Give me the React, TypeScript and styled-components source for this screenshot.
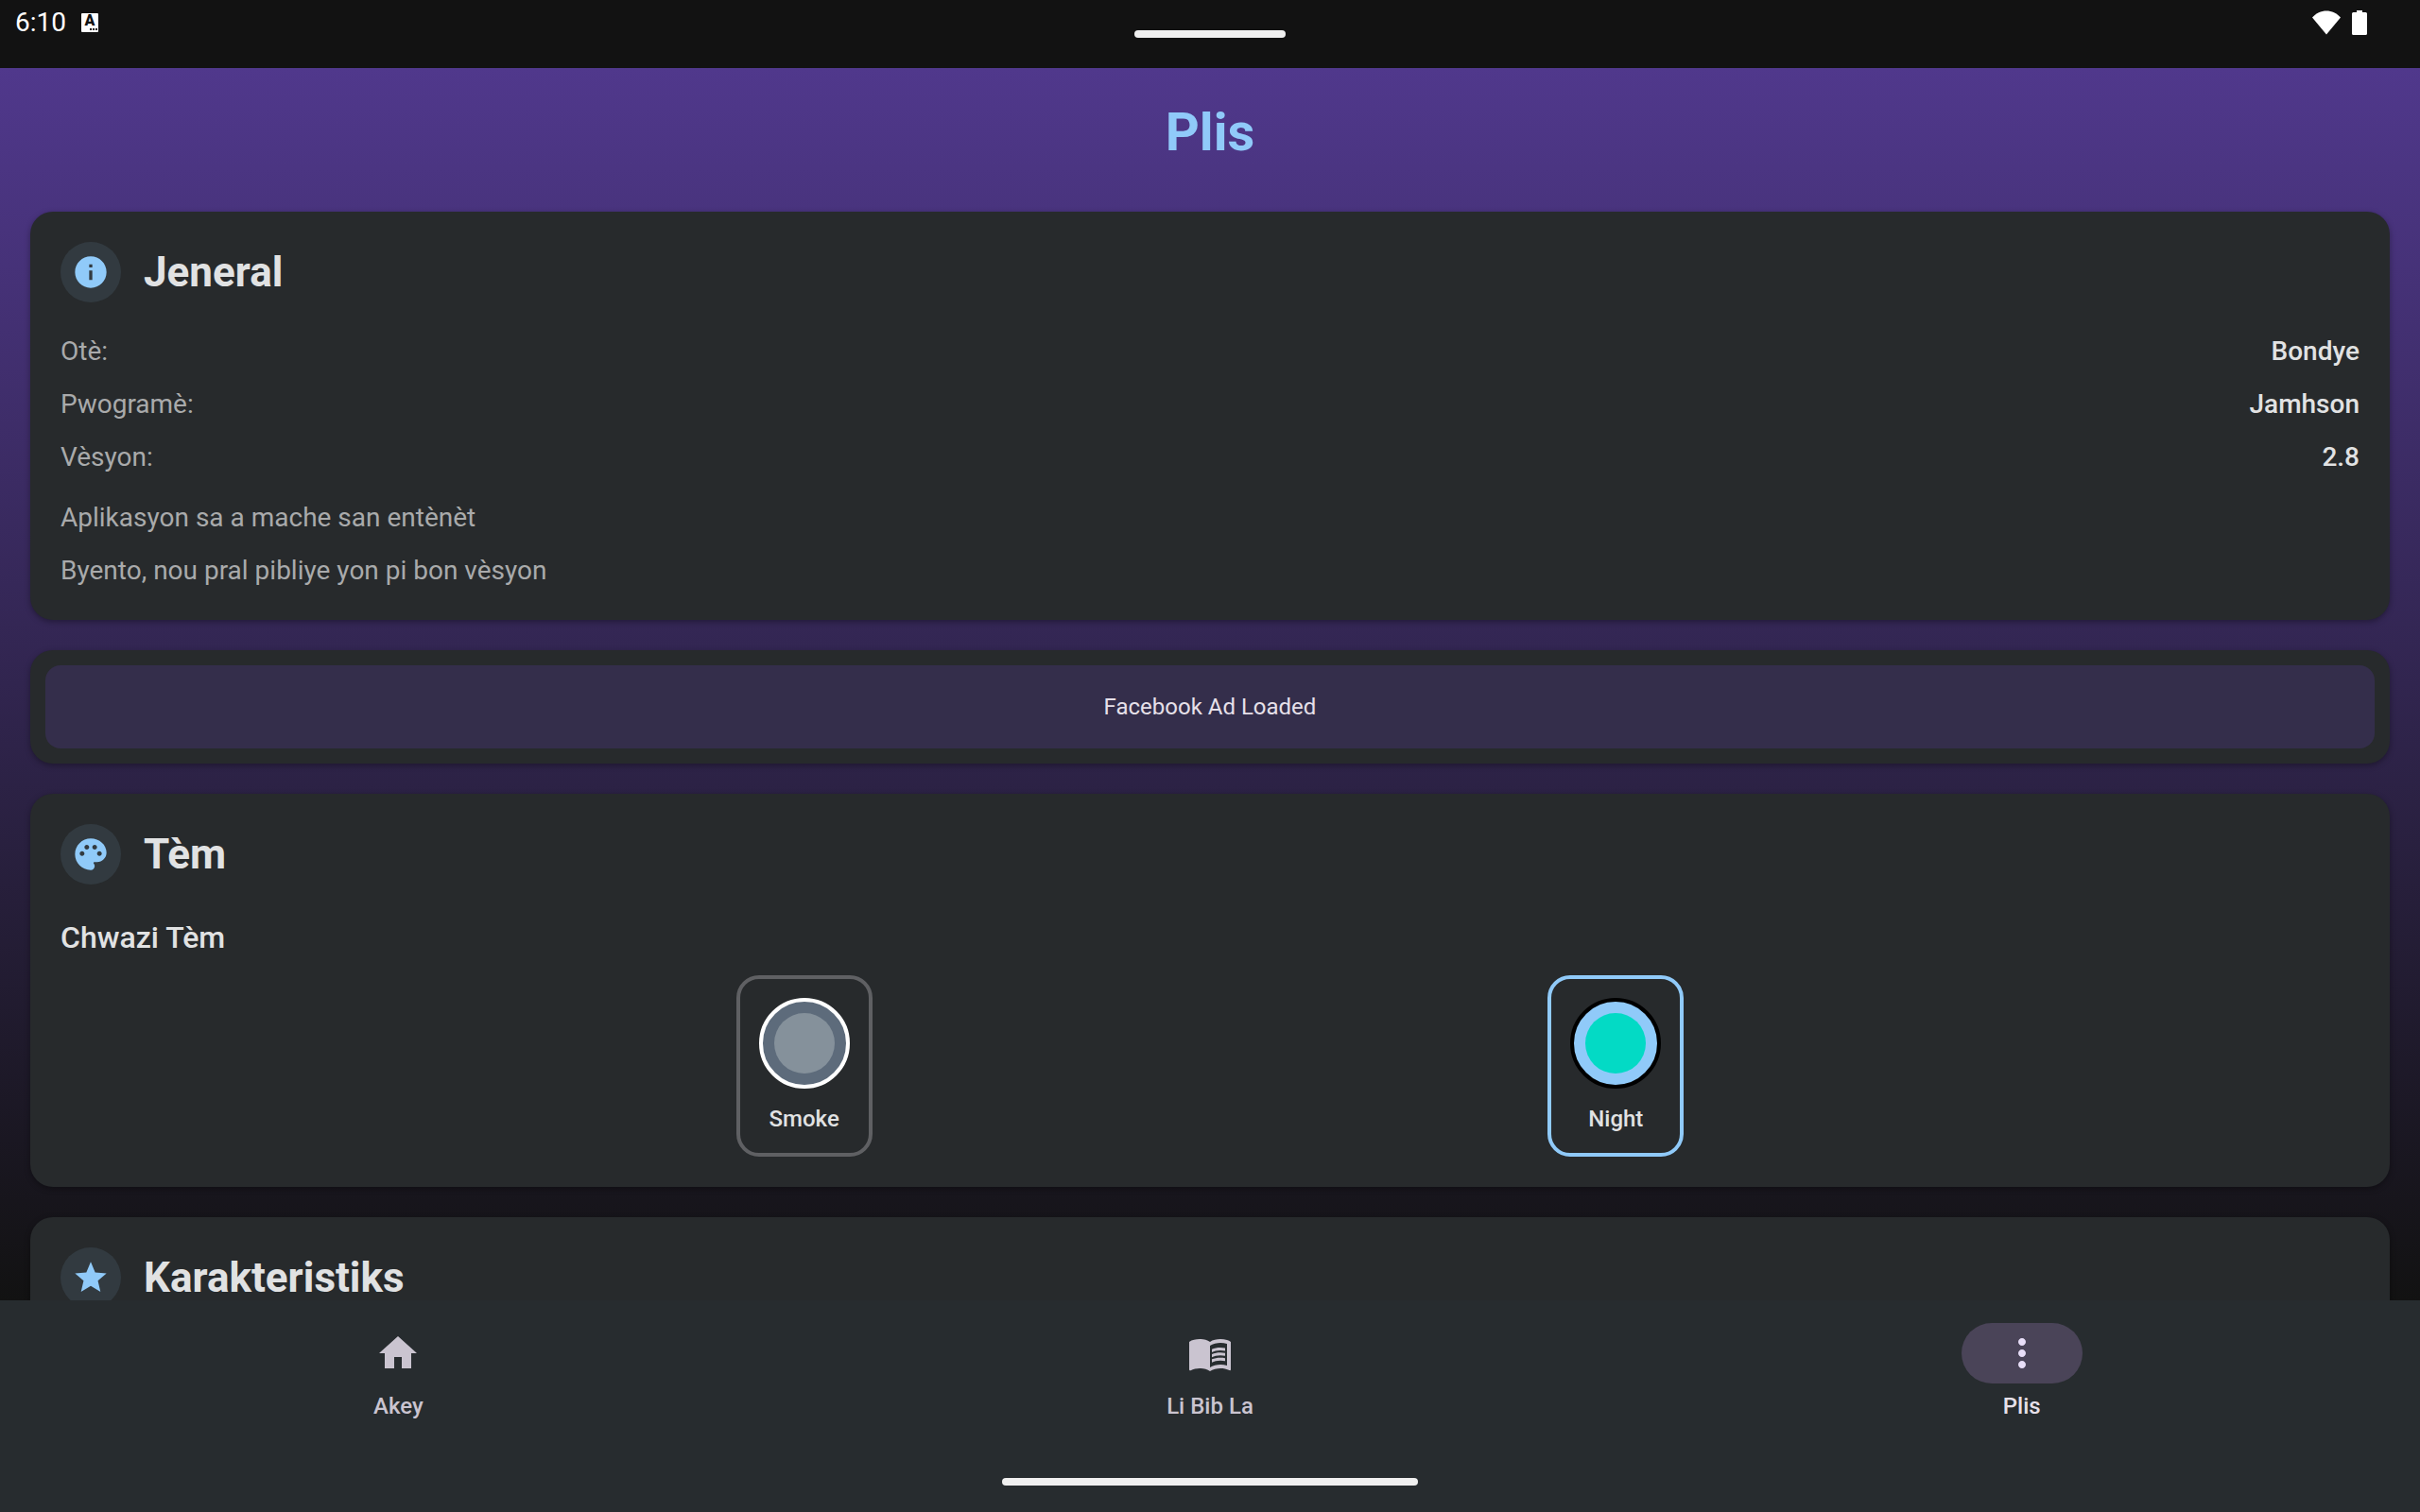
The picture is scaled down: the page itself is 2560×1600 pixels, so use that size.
import React, { useState } from "react";
import styled, { createGlobalStyle } from "styled-components";
import { MdHome, MdInfo, MdMenuBook, MdMoreVert, MdPalette, MdStar } from "react-icons/md";

const color = {
  bar: "#121212",
  card: "#272a2c",
  nav: "#272c2f",
  accent: "#90caf9",
  text: "#e1e2e3",
  muted: "#a9aaab",
};

const GlobalStyle = createGlobalStyle`
  *, *::before, *::after { box-sizing: border-box; }
  body {
    margin: 0;
    background: ${color.bar};
    font-family: Roboto, "Liberation Sans", sans-serif;
    color: ${color.text};
  }
  h1, h2, h3, p, dl, dd { margin: 0; }
`;

const Screen = styled.div`
  height: 100vh;
  display: flex;
  flex-direction: column;
`;

const StatusBar = styled.header`
  position: relative;
  flex: none;
  height: 72px;
  padding: 0 56px 24px 16px;
  display: flex;
  justify-content: space-between;
  align-items: center;
  background: ${color.bar};
  color: #fff;
`;

const StatusGroup = styled.div<{ $gap: number }>`
  display: flex;
  align-items: center;
  gap: ${(p) => p.$gap}px;
`;

const Clock = styled.time`
  font-size: 28px;
  line-height: 32px;
`;

const KeyboardBadge = styled.span`
  width: 18px;
  height: 20px;
  border-radius: 1px;
  background: #fff;
  color: ${color.bar};
  display: flex;
  flex-direction: column;
  align-items: center;
  font-size: 16px;
  font-weight: 900;
  line-height: 16px;
`;

const BadgeDots = styled.span`
  align-self: flex-end;
  width: 8px;
  height: 2px;
  margin-right: 1px;
  background: repeating-linear-gradient(to right, ${color.bar} 0 2px, #fff 2px 3px);
`;

const Handle = styled.span<{ $width: number }>`
  display: block;
  width: ${(p) => p.$width}px;
  height: 8px;
  border-radius: 4px;
  background: #f0f0f0;
`;

const TopHandle = styled(Handle)`
  position: absolute;
  top: 32px;
  left: 50%;
  transform: translateX(-50%);
`;

const Content = styled.main`
  flex: 1;
  min-height: 0;
  overflow-y: auto;
  scrollbar-width: none;
  padding: 32px;
  display: flex;
  flex-direction: column;
  gap: 32px;
  background: linear-gradient(#50388c, ${color.bar});
`;

const PageTitle = styled.h1`
  padding-bottom: 16px;
  text-align: center;
  font-size: 56px;
  line-height: 72px;
  font-weight: 700;
  color: ${color.accent};
`;

const Card = styled.section<{ $tight?: boolean }>`
  flex: none;
  padding: ${(p) => (p.$tight ? 16 : 32)}px;
  border-radius: 24px;
  background: ${color.card};
  box-shadow: 0 2px 6px rgba(0, 0, 0, 0.35);
`;

const CardHeader = styled.div`
  display: flex;
  align-items: center;
  gap: 24px;
  margin-bottom: 32px;
`;

const CardIcon = styled.span`
  width: 64px;
  height: 64px;
  border-radius: 50%;
  display: grid;
  place-items: center;
  background: rgba(144, 202, 249, 0.1);
  color: ${color.accent};
  font-size: 40px;
`;

const CardTitle = styled.h2`
  font-size: 44px;
  line-height: 56px;
  font-weight: 700;
`;

const InfoList = styled.dl`
  display: flex;
  flex-direction: column;
  gap: 16px;
  margin-bottom: 24px;
`;

const InfoRow = styled.div`
  display: flex;
  justify-content: space-between;
  font-size: 28px;
  line-height: 40px;
`;

const InfoLabel = styled.dt`
  color: ${color.muted};
`;

const InfoValue = styled.dd`
  font-weight: 500;
`;

const Notes = styled.div`
  display: flex;
  flex-direction: column;
  gap: 16px;
`;

const Note = styled.p`
  font-size: 28px;
  line-height: 40px;
  color: ${color.muted};
`;

const AdSlot = styled.div`
  padding: 28px;
  border-radius: 16px;
  background: #342e4b;
  text-align: center;
  font-size: 24px;
  line-height: 32px;
  color: #e6e0e9;
`;

const ThemeField = styled.fieldset`
  margin: 0;
  padding: 0;
  border: 0;
`;

const ThemeLegend = styled.legend`
  padding: 0;
  margin-bottom: 16px;
  font-size: 32px;
  line-height: 48px;
  font-weight: 500;
`;

const ThemeOptions = styled.div`
  display: flex;
  justify-content: space-evenly;
`;

const ThemeOption = styled.label<{ $selected: boolean }>`
  position: relative;
  width: 144px;
  padding: 20px;
  border: 4px solid ${(p) => (p.$selected ? color.accent : "#5f6063")};
  border-radius: 24px;
  display: flex;
  flex-direction: column;
  align-items: center;
  gap: 16px;
  font-size: 24px;
  line-height: 32px;
  font-weight: 500;
  cursor: pointer;
`;

const ThemeRadio = styled.input`
  position: absolute;
  inset: 0;
  width: 100%;
  height: 100%;
  margin: 0;
  appearance: none;
  cursor: pointer;
`;

const Swatch = styled.span<{ $ring: string; $fill: string; $core: string }>`
  width: 96px;
  height: 96px;
  border: 4px solid ${(p) => p.$ring};
  border-radius: 50%;
  display: grid;
  place-items: center;
  background: ${(p) => p.$fill};

  &::after {
    content: "";
    width: 64px;
    height: 64px;
    border-radius: 50%;
    background: ${(p) => p.$core};
  }
`;

const BottomBar = styled.footer`
  flex: none;
  padding-bottom: 28px;
  display: flex;
  flex-direction: column;
  align-items: center;
  gap: 28px;
  background: ${color.nav};
`;

const Nav = styled.nav`
  width: 100%;
  padding: 24px 0 32px;
  display: grid;
  grid-template-columns: repeat(3, 1fr);
  gap: 16px;
`;

const NavItem = styled.a<{ $active: boolean }>`
  display: flex;
  flex-direction: column;
  align-items: center;
  gap: 8px;
  text-decoration: none;
  font-size: 24px;
  line-height: 32px;
  font-weight: 500;
  color: ${(p) => (p.$active ? "#e6e0e9" : "#cac4d0")};
`;

const NavPill = styled.span<{ $active: boolean }>`
  width: 128px;
  height: 64px;
  border-radius: 32px;
  display: grid;
  place-items: center;
  font-size: 48px;
  background: ${(p) => (p.$active ? "#4a4458" : "transparent")};
  color: ${(p) => (p.$active ? "#e8def8" : "#cac4d0")};
`;

const info = [
  { label: "Otè:", value: "Bondye" },
  { label: "Pwogramè:", value: "Jamhson" },
  { label: "Vèsyon:", value: "2.8" },
];

const themes = [
  { id: "smoke", name: "Smoke", ring: "#ffffff", fill: "#5d6b7b", core: "#85919b" },
  { id: "night", name: "Night", ring: "#000000", fill: "#90caf9", core: "#03dac5" },
];

const tabs = [
  { id: "akey", label: "Akey", icon: <MdHome /> },
  { id: "bib", label: "Li Bib La", icon: <MdMenuBook /> },
  { id: "plis", label: "Plis", icon: <MdMoreVert /> },
];

function SectionHeader({ icon, title }: { icon: React.ReactNode; title: string }) {
  return (
    <CardHeader>
      <CardIcon>{icon}</CardIcon>
      <CardTitle>{title}</CardTitle>
    </CardHeader>
  );
}

export default function App() {
  const [theme, setTheme] = useState("night");
  const [tab, setTab] = useState("plis");

  return (
    <Screen>
      <GlobalStyle />
      <StatusBar>
        <StatusGroup $gap={16}>
          <Clock>6:10</Clock>
          <KeyboardBadge>
            A
            <BadgeDots />
          </KeyboardBadge>
        </StatusGroup>
        <TopHandle $width={160} />
        <StatusGroup $gap={12}>
          <svg width="30" height="26" viewBox="0 0 30 26" fill="#fff" role="img" aria-label="Wi-Fi">
            <path d="M15 25.500L0 7.500C4 3 9.500 0.500 15 0.500S26 3 30 7.500Z" />
          </svg>
          <svg width="16" height="26" viewBox="0 0 16 26" fill="#fff" role="img" aria-label="Battery">
            <path d="M5 0h6v2h3.500Q16 2 16 3.500v21Q16 26 14.500 26h-13Q0 26 0 24.500v-21Q0 2 1.500 2H5Z" />
          </svg>
        </StatusGroup>
      </StatusBar>

      <Content>
        <PageTitle>Plis</PageTitle>

        <Card>
          <SectionHeader icon={<MdInfo />} title="Jeneral" />
          <InfoList>
            {info.map((row) => (
              <InfoRow key={row.label}>
                <InfoLabel>{row.label}</InfoLabel>
                <InfoValue>{row.value}</InfoValue>
              </InfoRow>
            ))}
          </InfoList>
          <Notes>
            <Note>Aplikasyon sa a mache san entènèt</Note>
            <Note>Byento, nou pral pibliye yon pi bon vèsyon</Note>
          </Notes>
        </Card>

        <Card $tight>
          <AdSlot>Facebook Ad Loaded</AdSlot>
        </Card>

        <Card>
          <SectionHeader icon={<MdPalette />} title="Tèm" />
          <ThemeField>
            <ThemeLegend>Chwazi Tèm</ThemeLegend>
            <ThemeOptions>
              {themes.map((t) => (
                <ThemeOption key={t.id} htmlFor={t.id} $selected={theme === t.id}>
                  <ThemeRadio
                    type="radio"
                    name="theme"
                    id={t.id}
                    checked={theme === t.id}
                    onChange={() => setTheme(t.id)}
                  />
                  <Swatch $ring={t.ring} $fill={t.fill} $core={t.core} />
                  {t.name}
                </ThemeOption>
              ))}
            </ThemeOptions>
          </ThemeField>
        </Card>

        <Card>
          <SectionHeader icon={<MdStar />} title="Karakteristiks" />
        </Card>
      </Content>

      <BottomBar>
        <Nav>
          {tabs.map((t) => (
            <NavItem
              key={t.id}
              href={`#${t.id}`}
              $active={tab === t.id}
              aria-current={tab === t.id ? "page" : undefined}
              onClick={() => setTab(t.id)}
            >
              <NavPill $active={tab === t.id}>{t.icon}</NavPill>
              {t.label}
            </NavItem>
          ))}
        </Nav>
        <Handle $width={440} />
      </BottomBar>
    </Screen>
  );
}
